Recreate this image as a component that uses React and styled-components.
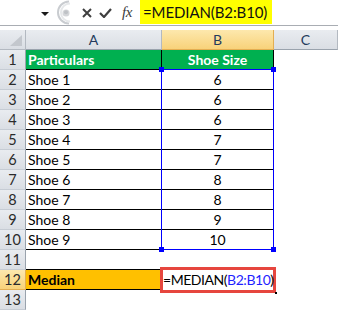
import React from "react";
import styled, { createGlobalStyle } from "styled-components";

const GlobalStyle = createGlobalStyle`
  html, body {
    margin: 0;
    padding: 0;
    background: #fff;
  }
  body {
    font-family: Lato, "Liberation Sans", sans-serif;
  }
`;

const Sheet = styled.div`
  width: 338px;
  height: 310px;
  overflow: hidden;
  background: #fff;
`;

/* ---------- formula bar ---------- */

const FormulaBar = styled.div`
  display: flex;
  align-items: stretch;
  height: 25px;
  border-bottom: 1px solid #a9adb3;
  margin-bottom: 4px;
`;

const NameBox = styled.div`
  width: 55px;
  display: flex;
  align-items: center;
  justify-content: flex-end;
  padding-right: 6px;
  box-sizing: border-box;
`;

const DropArrow = styled.div`
  width: 0;
  height: 0;
  border-left: 4px solid transparent;
  border-right: 4px solid transparent;
  border-top: 4px solid #1a1a1a;
  margin-top: 3px;
`;

const Tools = styled.div`
  display: flex;
  align-items: center;
  gap: 7px;
  width: 66px;
  padding-left: 9px;
  box-sizing: border-box;
`;

const Fx = styled.span`
  font-family: "Liberation Serif", serif;
  font-style: italic;
  font-size: 15px;
  color: #3a3a3a;
  margin-left: 3px;
  letter-spacing: -0.5px;
`;

const FormulaField = styled.div`
  flex: 1;
  display: flex;
  align-items: stretch;
  padding-left: 1px;
`;

const Highlight = styled.span`
  background: #ffff00;
  padding: 0 5px 0 3px;
  font-size: 15px;
  line-height: 24px;
  height: 24px;
  color: #111;
  letter-spacing: -0.1px;
`;

/* ---------- grid ---------- */

const Grid = styled.div`
  display: grid;
  grid-template-columns: 26px 136px 112px 64px;
  grid-template-rows: repeat(14, 20px);
`;

const headerBg = (active) =>
  active
    ? "linear-gradient(#fde8ad, #f8d27a)"
    : "linear-gradient(#e9ecf0, #dadee4)";

const Corner = styled.div`
  grid-row: 1;
  grid-column: 1;
  background: ${headerBg(false)};
  border-right: 1px solid #b3b9c1;
  border-bottom: 1px solid #b3b9c1;
  display: flex;
  align-items: flex-end;
  justify-content: flex-end;
  padding: 0 3px 3px 0;
`;

const ColHeader = styled.div`
  grid-row: 1;
  grid-column: ${(p) => p.$col};
  background: ${(p) => headerBg(p.$active)};
  border-right: 1px solid ${(p) => (p.$active ? "#e3ae52" : "#b3b9c1")};
  border-bottom: 1px solid ${(p) => (p.$active ? "#e3ae52" : "#9aa3ad")};
  display: flex;
  align-items: center;
  justify-content: center;
  font-size: 14px;
  color: #243a5c;
`;

const RowHeader = styled.div`
  grid-row: ${(p) => p.$row};
  grid-column: 1;
  background: ${(p) => headerBg(p.$active)};
  border-right: 1px solid ${(p) => (p.$active ? "#e3ae52" : "#9aa3ad")};
  border-bottom: 1px solid ${(p) => (p.$active ? "#e3ae52" : "#c6ccd4")};
  display: flex;
  align-items: center;
  justify-content: center;
  font-size: 14.5px;
  color: #2b2b2b;
`;

const Cell = styled.div`
  grid-row: ${(p) => p.$row};
  grid-column: ${(p) => p.$col};
  background: ${(p) => p.$fill || "#fff"};
  border-right: 1px solid ${(p) => (p.$right ? "#000" : "transparent")};
  border-bottom: 1px solid ${(p) => (p.$bottom ? "#000" : "transparent")};
  font-size: 14px;
  font-weight: ${(p) => (p.$bold ? 700 : 400)};
  color: ${(p) => p.$color || "#000"};
  text-align: ${(p) => p.$align || "left"};
  line-height: 19px;
  padding: 0 2px;
  white-space: nowrap;
`;

const Selection = styled.div`
  grid-column: 3;
  grid-row: 3 / 12;
  margin: -1px 0 0 -1px;
  border: 1px solid #0000ff;
  position: relative;
  pointer-events: none;
  z-index: 1;
`;

const Handle = styled.span`
  position: absolute;
  width: 5px;
  height: 5px;
  background: #0000ff;
  ${(p) => (p.$top ? "top: -3px;" : "bottom: -3px;")}
  ${(p) => (p.$left ? "left: -3px;" : "right: -3px;")}
`;

const EditCell = styled.div`
  grid-column: 3;
  grid-row: 13;
  margin: -3px -2px;
  border: 3px solid #e6463e;
  background: #fff;
  font-size: 14px;
  letter-spacing: -0.45px;
  line-height: 20px;
  white-space: nowrap;
  position: relative;
  z-index: 1;

  &::after {
    content: "";
    position: absolute;
    right: -4px;
    bottom: -4px;
    width: 2px;
    height: 2px;
    background: #000;
  }
`;

const Ref = styled.span`
  color: ${(p) => p.$color};
`;

const Grip = () => (
  <svg width="18" height="25" viewBox="0 0 18 25">
    <path
      d="M14 1.5 A 11 11 0 0 0 14 23.5"
      fill="none"
      stroke="#c9ccd0"
      strokeWidth="2"
    />
    <path
      d="M15 3.5 A 9 9 0 0 0 15 21.5"
      fill="none"
      stroke="#e6e8ea"
      strokeWidth="2"
    />
    <circle cx="11" cy="13" r="3.5" fill="#d4d6d9" />
    <circle cx="11" cy="12.2" r="2" fill="#bfc2c6" />
  </svg>
);

const CrossIcon = () => (
  <svg width="10" height="10" viewBox="0 0 10 10">
    <path d="M1 1 L9 9 M9 1 L1 9" stroke="#3f3f3f" strokeWidth="2" />
  </svg>
);

const CheckIcon = () => (
  <svg width="13" height="10" viewBox="0 0 13 10">
    <path d="M1 5 L5 9 L12 1" stroke="#3f3f3f" strokeWidth="2.2" fill="none" />
  </svg>
);

const CornerMark = () => (
  <svg width="12" height="11" viewBox="0 0 12 11">
    <polygon points="12,0 12,11 0,11" fill="#c3c7cd" />
  </svg>
);

const rows = [
  ["Shoe 1", "6"],
  ["Shoe 2", "6"],
  ["Shoe 3", "6"],
  ["Shoe 4", "7"],
  ["Shoe 5", "7"],
  ["Shoe 6", "8"],
  ["Shoe 7", "8"],
  ["Shoe 8", "9"],
  ["Shoe 9", "10"],
];

export default function App() {
  return (
    <Sheet>
      <GlobalStyle />
      <FormulaBar>
        <NameBox>
          <DropArrow />
        </NameBox>
        <Grip />
        <Tools>
          <CrossIcon />
          <CheckIcon />
          <Fx>fx</Fx>
        </Tools>
        <FormulaField>
          <Highlight>=MEDIAN(B2:B10)</Highlight>
        </FormulaField>
      </FormulaBar>

      <Grid>
        <Corner>
          <CornerMark />
        </Corner>
        <ColHeader $col={2}>A</ColHeader>
        <ColHeader $col={3} $active>
          B
        </ColHeader>
        <ColHeader $col={4}>C</ColHeader>

        <RowHeader $row={2}>1</RowHeader>
        <Cell $row={2} $col={2} $fill="#00b050" $color="#fff" $bold $right $bottom>
          Particulars
        </Cell>
        <Cell
          $row={2}
          $col={3}
          $fill="#00b050"
          $color="#fff"
          $bold
          $right
          $bottom
          $align="center"
        >
          Shoe Size
        </Cell>

        {rows.map(([name, size], i) => (
          <React.Fragment key={name}>
            <RowHeader $row={i + 3}>{i + 2}</RowHeader>
            <Cell $row={i + 3} $col={2} $right $bottom>
              {name}
            </Cell>
            <Cell $row={i + 3} $col={3} $right $bottom $align="center">
              {size}
            </Cell>
          </React.Fragment>
        ))}

        <RowHeader $row={12}>11</RowHeader>
        <Cell $row={12} $col={2} $bottom />

        <RowHeader $row={13} $active>
          12
        </RowHeader>
        <Cell $row={13} $col={2} $fill="#ffc000" $bold $bottom>
          Median
        </Cell>

        <RowHeader $row={14}>13</RowHeader>

        <Selection>
          <Handle $top $left />
          <Handle $top />
          <Handle $left />
          <Handle />
        </Selection>

        <EditCell>
          =MEDIAN(<Ref $color="#1f1fff">B2:B10</Ref>)
        </EditCell>
      </Grid>
    </Sheet>
  );
}
